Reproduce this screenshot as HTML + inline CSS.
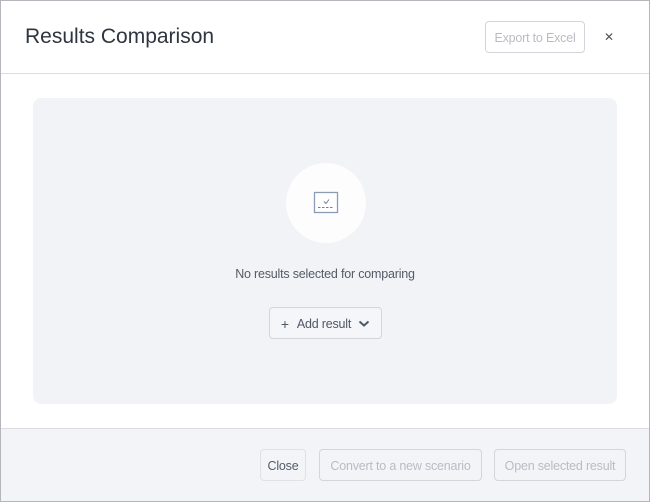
<!DOCTYPE html>
<html><head><style>
*{box-sizing:border-box;margin:0;padding:0}
body{width:650px;height:502px;background:#fff;font-family:"Liberation Sans",sans-serif;overflow:hidden}
.dlg{position:absolute;left:0;top:0;width:650px;height:502px;border:1px solid #b4b6bb;background:#fff}
.in{position:absolute;left:-1px;top:-1px;width:650px;height:502px}
.hdr{position:absolute;left:1px;top:0;width:648px;height:74px;border-bottom:1px solid #dcdde2}
.title{position:absolute;left:24px;top:25px;font-size:21px;color:#2f3540}
.btn{position:absolute;border:1px solid #d3d5da;border-radius:4px;font-size:12.5px;color:#b9bcc3;background:transparent;display:flex;align-items:center;justify-content:center;white-space:nowrap;letter-spacing:-0.2px;padding-top:1px}
.x{position:absolute;left:603px;top:30px;font-size:12px;color:#555}
.panel{position:absolute;left:33px;top:98px;width:584px;height:306px;background:#f2f3f7;border-radius:8px}
.circ{position:absolute;left:253px;top:65px;width:80px;height:80px;border-radius:50%;background:#fdfdfe}
.msg{position:absolute;left:0;width:584px;top:169px;text-align:center;font-size:12.5px;color:#545b66;letter-spacing:-0.2px}
.ftr{position:absolute;left:1px;top:428px;width:648px;height:73px;background:#f3f4f8;border-top:1px solid #dcdde2}
</style></head><body>
<div class="dlg"><div class="in">
<div class="hdr">
<div class="title">Results Comparison</div>
<div class="btn" style="left:484px;top:21px;width:100px;height:32px">Export to Excel</div>
<div class="x">✕</div>
</div>
<div class="panel">
<div class="circ">
<svg width="80" height="80" viewBox="0 0 80 80">
<rect x="28.5" y="29.5" width="23" height="20" fill="#fff" stroke="#8a9db5" stroke-width="1.3"/>
<path d="M38 38.5l2 2 3-4" fill="none" stroke="#6b7fa0" stroke-width="1"/>
<path d="M32 44.5h16" stroke="#6b7fa0" stroke-width="1" stroke-dasharray="2.5 1.5"/>
</svg>
</div>
<div class="msg">No results selected for comparing</div>
<div class="btn" style="left:236px;top:209px;width:113px;height:32px;color:#4f5866;background:#f5f6f9">
<span style="margin-right:8px;font-size:14px">+</span>Add result
<svg width="12" height="8" style="margin-left:7px"><path d="M1.5 1.5l4.5 4 4.5-4" fill="none" stroke="#4f5866" stroke-width="2"/></svg></div>
</div>
<div class="ftr">
<div class="btn" style="left:259px;top:20px;width:46px;height:32px;color:#555c68;border-color:#dfe1e5">Close</div>
<div class="btn" style="left:318px;top:20px;width:163px;height:32px">Convert to a new scenario</div>
<div class="btn" style="left:493px;top:20px;width:132px;height:32px">Open selected result</div>
</div>
</div></div>
</body></html>
